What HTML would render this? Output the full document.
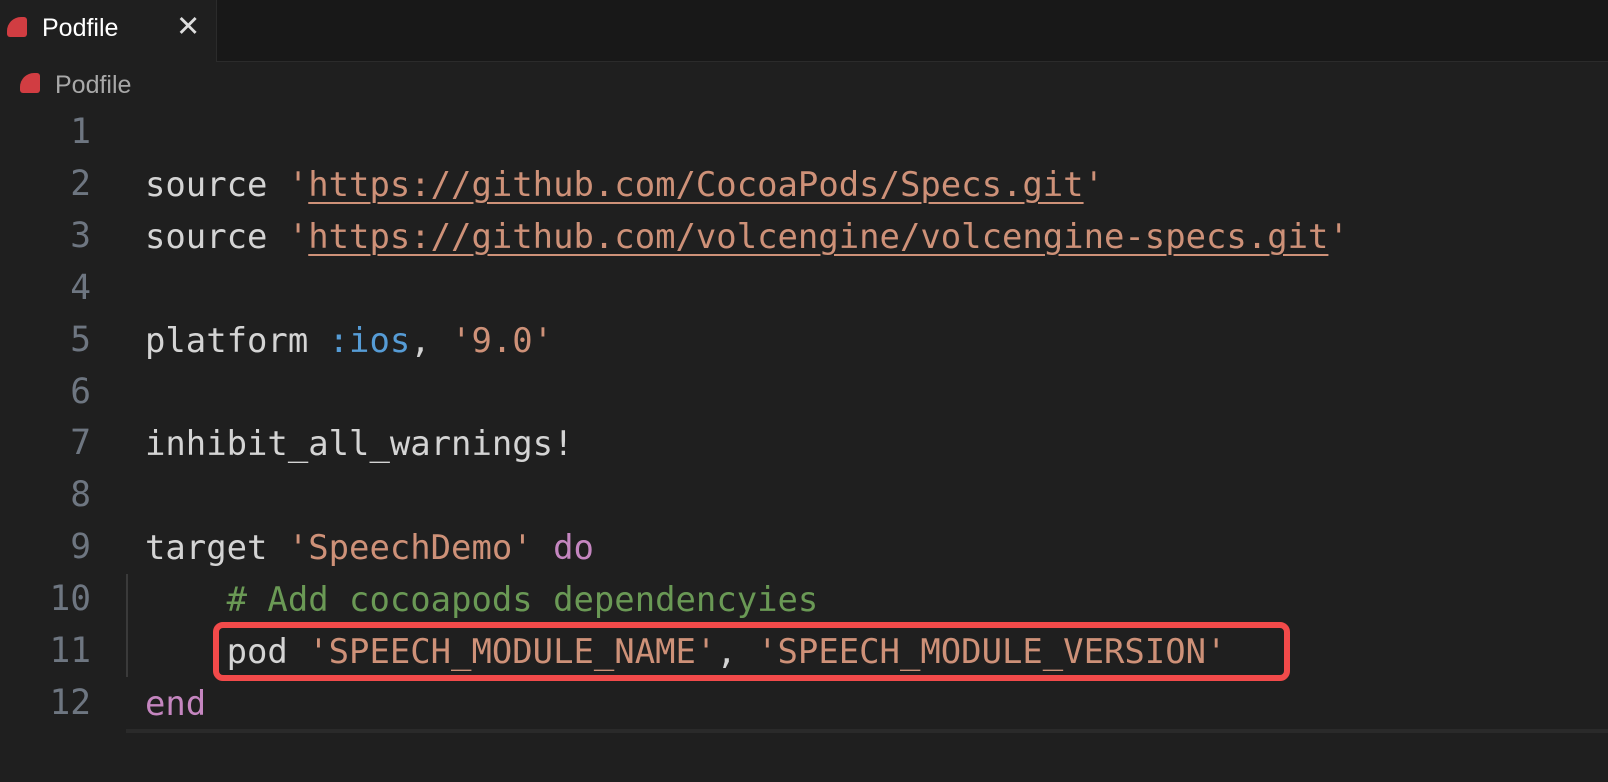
<!DOCTYPE html>
<html><head><style>
body{margin:0;width:1608px;height:738px;background:#1f1f1f;overflow:hidden;position:relative;font-family:"Liberation Sans",sans-serif}
.tabbar{position:absolute;left:0;top:0;width:1608px;height:62px;background:#181818;border-bottom:1px solid #2b2b2b;box-sizing:border-box}
.tab{position:absolute;left:0;top:0;width:217px;height:62px;background:#1f1f1f;border-right:1px solid #2b2b2b;box-sizing:border-box}
.ico{position:absolute;width:20px;height:20px;background:#d13d42;border-radius:14px 3px 3px 3px}
.t{position:absolute;color:#fff;font-size:25px;line-height:30px}
.code{position:absolute;left:0;top:107px;font-family:"DejaVu Sans Mono","Liberation Mono",monospace;font-size:33.9px;line-height:51.9px;color:#d4d4d4;white-space:pre}
.ln{position:absolute;left:0;width:91px;text-align:right;color:#6e7681;font-size:34.5px}
.tx{position:absolute;left:145px}
.s{color:#ce9178}.u{text-decoration:underline;text-underline-offset:6px;text-decoration-thickness:2px}
.c{color:#6a9955}.k{color:#c586c0}.b{color:#569cd6}
</style></head><body>
<div class="tabbar"><div class="tab">
<div class="ico" style="left:7px;top:17px"></div>
<div class="t" style="left:42px;top:13px">Podfile</div>
<div class="t" style="left:176px;top:12px;font-size:29px;color:#ddd">✕</div>
</div></div>
<div class="ico" style="left:20px;top:73px"></div>
<div class="t" style="left:55px;top:70px;color:#a8a8a8">Podfile</div>
<div style="position:absolute;left:126px;top:574px;width:2px;height:103px;background:#3a3a3a"></div>
<div style="position:absolute;left:126px;top:729px;width:1482px;height:9px;background:#1f1f1f;border-top:4px solid #2a2a2a"></div>
<div class="code">
<div class="ln" style="top:0">1</div>
<div class="ln" style="top:51.9px">2</div><div class="tx" style="top:51.9px">source <span class="s">'<span class="u">https://github.com/CocoaPods/Specs.git</span>'</span></div>
<div class="ln" style="top:103.8px">3</div><div class="tx" style="top:103.8px">source <span class="s">'<span class="u">https://github.com/volcengine/volcengine-specs.git</span>'</span></div>
<div class="ln" style="top:155.7px">4</div>
<div class="ln" style="top:207.6px">5</div><div class="tx" style="top:207.6px">platform <span class="b">:ios</span>, <span class="s">'9.0'</span></div>
<div class="ln" style="top:259.5px">6</div>
<div class="ln" style="top:311.4px">7</div><div class="tx" style="top:311.4px">inhibit_all_warnings!</div>
<div class="ln" style="top:363.3px">8</div>
<div class="ln" style="top:415.2px">9</div><div class="tx" style="top:415.2px">target <span class="s">'SpeechDemo'</span> <span class="k">do</span></div>
<div class="ln" style="top:467.1px">10</div><div class="tx" style="top:467.1px">    <span class="c"># Add cocoapods dependencyies</span></div>
<div class="ln" style="top:519px">11</div><div class="tx" style="top:519px">    pod <span class="s">'SPEECH_MODULE_NAME'</span>, <span class="s">'SPEECH_MODULE_VERSION'</span></div>
<div class="ln" style="top:570.9px">12</div><div class="tx k" style="top:570.9px">end</div>
</div>
<div style="position:absolute;left:213px;top:622px;width:1077px;height:59px;border:6px solid #f24a4a;border-radius:10px;box-sizing:border-box"></div>
</body></html>
